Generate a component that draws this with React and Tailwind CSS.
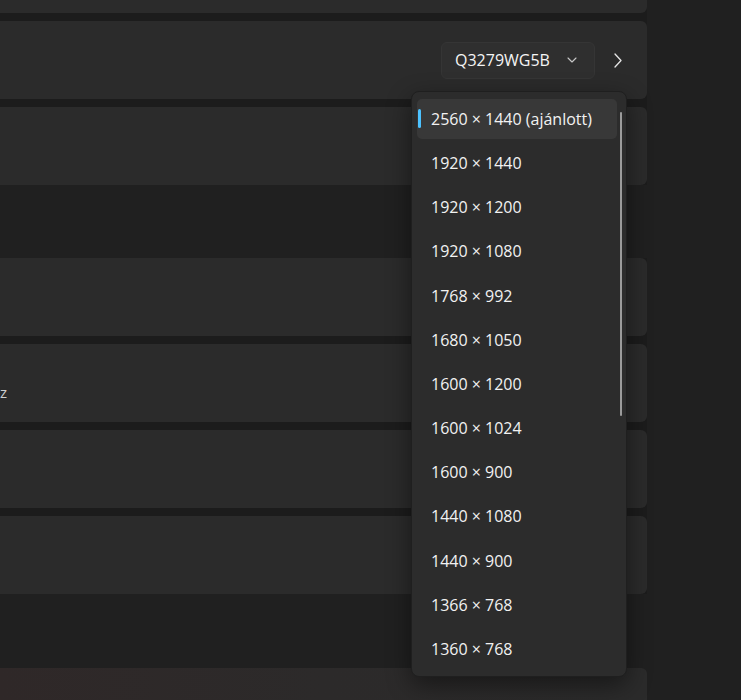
import React from "react";

const resolutions = [
  "2560 × 1440 (ajánlott)",
  "1920 × 1440",
  "1920 × 1200",
  "1920 × 1080",
  "1768 × 992",
  "1680 × 1050",
  "1600 × 1200",
  "1600 × 1024",
  "1600 × 900",
  "1440 × 1080",
  "1440 × 900",
  "1366 × 768",
  "1360 × 768",
];

const Card = ({ children, className = "" }) => (
  <div className={`h-[78px] rounded-r-[6px] bg-[#2b2b2b] flex items-center ${className}`}>
    {children}
  </div>
);

const App = () => {
  return (
    <div
      className="relative w-[741px] h-[700px] overflow-hidden bg-[#202020] text-white"
      style={{ fontFamily: '"Open Sans", "Noto Sans", sans-serif' }}
    >
      <div className="w-[647px] flex flex-col -mt-[65px]">
        {/* Top group */}
        <div className="flex flex-col gap-[8px] bg-[#1c1c1c]">
          <Card />
          <Card className="justify-end pr-[25px]">
            <button className="h-[37px] w-[154px] flex items-center justify-between pl-[13px] pr-[17px] rounded-[6px] bg-[#2f2f2f] border border-[#353535] text-[16px] text-[#f5f5f5]">
              <span>Q3279WG5B</span>
              <svg width="10" height="6" viewBox="0 0 10 6" fill="none">
                <path d="M1 1l4 4 4-4" stroke="#c8c8c8" strokeWidth="1.1" strokeLinecap="round" strokeLinejoin="round" />
              </svg>
            </button>
            <svg className="ml-[19px]" width="8" height="15" viewBox="0 0 8 15" fill="none">
              <path d="M1 1l6 6.5L1 14" stroke="#e6e6e6" strokeWidth="1.3" strokeLinecap="round" strokeLinejoin="round" />
            </svg>
          </Card>
          <Card />
        </div>

        <div className="h-[73px]" />

        {/* Middle group */}
        <div className="flex flex-col gap-[8px] bg-[#1c1c1c]">
          <Card />
          <Card className="items-start">
            <span className="mt-[38px] text-[15px] leading-[20px] text-[#cfcfcf]">z</span>
          </Card>
          <Card />
          <Card />
        </div>

        <div className="h-[74px]" />

        <div className="h-[78px] rounded-r-[6px] bg-gradient-to-r from-[#2f2828] via-[#2c2a2a] to-[#2b2b2b]" />
      </div>

      {/* Resolution dropdown */}
      <div className="absolute left-[411px] top-[91px] w-[216px] h-[586px] rounded-[8px] bg-[#2c2c2c] border border-[#1f1f1f] shadow-[0_8px_24px_rgba(0,0,0,0.45)]">
        <div className="flex flex-col gap-[4.17px] pt-[7px] pl-[5px] pr-[9px]">
          {resolutions.map((r, i) => (
            <div
              key={r}
              className={`relative h-[40px] flex items-center pl-[14px] rounded-[5px] text-[16px] text-[#f2f2f2] ${
                i === 0 ? "bg-[#383838]" : ""
              }`}
            >
              {i === 0 && (
                <span className="absolute left-[1px] top-[10px] w-[3px] h-[19px] rounded-full bg-[#4cc2ff]" />
              )}
              {r}
            </div>
          ))}
        </div>
        <div className="absolute left-[208px] top-[20px] w-[2px] h-[304px] rounded-full bg-[#9b9b9b]" />
      </div>
    </div>
  );
};

export default App;
